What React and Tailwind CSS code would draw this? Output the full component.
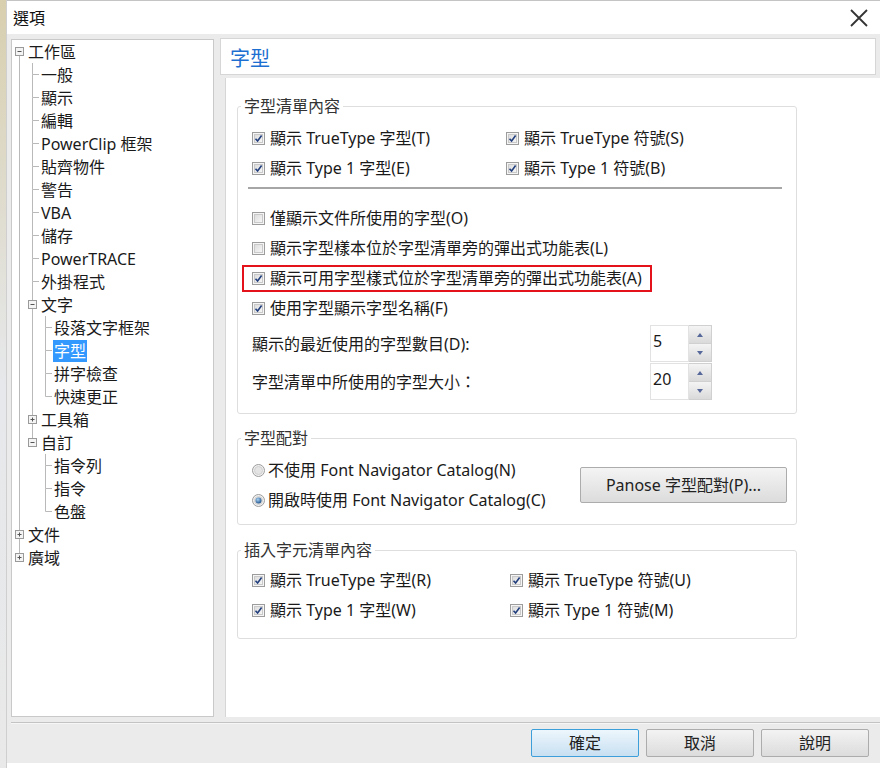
import React from 'react';

const FONT = { fontFamily: '"Noto Sans", "Noto Sans CJK TC", sans-serif' };

const tree = [
  { t: '工作區', l: 0, exp: '-' },
  { t: '一般', l: 1 },
  { t: '顯示', l: 1 },
  { t: '編輯', l: 1 },
  { t: 'PowerClip 框架', l: 1 },
  { t: '貼齊物件', l: 1 },
  { t: '警告', l: 1 },
  { t: 'VBA', l: 1 },
  { t: '儲存', l: 1 },
  { t: 'PowerTRACE', l: 1 },
  { t: '外掛程式', l: 1 },
  { t: '文字', l: 1, exp: '-' },
  { t: '段落文字框架', l: 2 },
  { t: '字型', l: 2, sel: true },
  { t: '拼字檢查', l: 2 },
  { t: '快速更正', l: 2 },
  { t: '工具箱', l: 1, exp: '+' },
  { t: '自訂', l: 1, exp: '-' },
  { t: '指令列', l: 2 },
  { t: '指令', l: 2 },
  { t: '色盤', l: 2 },
  { t: '文件', l: 0, exp: '+' },
  { t: '廣域', l: 0, exp: '+' },
];

// does the item (or ancestor) at level c still have a sibling below row i
const hasNext = (i, c) => {
  for (let j = i + 1; j < tree.length; j++) {
    if (tree[j].l < c) return false;
    if (tree[j].l === c) return true;
  }
  return false;
};

const LINE = '#b9b9b9';

const TreeGuides = ({ i, row }) => {
  const w = (row.l + 1) * 13;
  const own = row.l;
  const cx = own * 13 + 6.5;
  return (
    <svg width={w} height="23" className="shrink-0">
      {Array.from({ length: own }).map((_, c) =>
        hasNext(i, c) ? <line key={c} x1={c * 13 + 6.5} y1="0" x2={c * 13 + 6.5} y2="23" stroke={LINE} /> : null
      )}
      {i > 0 && <line x1={cx} y1="0" x2={cx} y2="11.5" stroke={LINE} />}
      {hasNext(i, own) && <line x1={cx} y1="11.5" x2={cx} y2="23" stroke={LINE} />}
      {row.exp ? (
        <g>
          <rect x={cx - 4} y="7.5" width="8" height="8" fill="#f4f4f4" stroke="#9a9a9a" />
          <line x1={cx - 2} y1="11.5" x2={cx + 2} y2="11.5" stroke="#555" />
          {row.exp === '+' && <line x1={cx} y1="9.5" x2={cx} y2="13.5" stroke="#555" />}
        </g>
      ) : (
        <line x1={cx} y1="11.5" x2={cx + 6.5} y2="11.5" stroke={LINE} />
      )}
    </svg>
  );
};

const Check = ({ on = true }) => (
  <svg width="13" height="13" className="shrink-0">
    <defs>
      <linearGradient id="cbg" x1="0" y1="0" x2="1" y2="1">
        <stop offset="0" stopColor="#dcdcdc" />
        <stop offset="1" stopColor="#f7f7f7" />
      </linearGradient>
    </defs>
    <rect x="0.5" y="0.5" width="12" height="12" fill="#f5f5f5" stroke="#9c9c9c" />
    <rect x="2.5" y="2.5" width="8" height="8" fill="url(#cbg)" stroke="#c9c9c9" />
    {on && <path d="M3.5 6.8 L5.6 9 L9.6 3.6" fill="none" stroke="#213e7c" strokeWidth="1.6" />}
  </svg>
);

const Radio = ({ on }) => (
  <svg width="13" height="13" className="shrink-0">
    <defs>
      <radialGradient id="rdot" cx="0.4" cy="0.35" r="0.7">
        <stop offset="0" stopColor="#a9d3f5" />
        <stop offset="1" stopColor="#1a4e86" />
      </radialGradient>
    </defs>
    <circle cx="6.5" cy="6.5" r="6" fill="#f0f0f0" stroke="#9c9c9c" />
    <circle cx="6.5" cy="6.5" r="4" fill="#e4e4e4" stroke="#d0d0d0" />
    {on && <circle cx="6.5" cy="6.5" r="3" fill="url(#rdot)" />}
  </svg>
);

const CheckRow = ({ text, on = true }) => (
  <div className="flex items-center h-[30px] gap-[5px] whitespace-nowrap">
    <Check on={on} />
    <span>{text}</span>
  </div>
);

const Spinner = ({ value }) => (
  <div className="flex h-[37px]">
    <div className="w-[39px] bg-white border border-[#e2e2e2] pl-[2px] pt-[5px] leading-[20px]">{value}</div>
    <div className="w-[23px] flex flex-col border border-[#d0d0d0] border-l-0">
      <div className="flex-1 flex items-center justify-center bg-gradient-to-b from-[#f4f4f4] to-[#dadada] border-b border-[#d0d0d0]">
        <svg width="6" height="4"><path d="M0 4 L3 0 L6 4 Z" fill="#56679a" /></svg>
      </div>
      <div className="flex-1 flex items-center justify-center bg-gradient-to-b from-[#f4f4f4] to-[#dadada]">
        <svg width="6" height="4"><path d="M0 0 L3 4 L6 0 Z" fill="#56679a" /></svg>
      </div>
    </div>
  </div>
);

const Group = ({ title, className = '', children }) => (
  <fieldset className={`w-[560px] border border-[#dedede] rounded-[3px] ${className}`}>
    <legend className="ml-[3px] px-[3px] leading-[20px] text-[#333]">{title}</legend>
    {children}
  </fieldset>
);

const Btn = ({ children, primary }) => (
  <button
    className={`w-[108px] h-[28px] rounded-[2px] border text-[16px] text-[#222] ${
      primary
        ? 'border-[#3d9fda] bg-gradient-to-b from-[#edf6fc] to-[#c8e0f2]'
        : 'border-[#acacac] bg-gradient-to-b from-[#f3f3f3] to-[#dcdcdc]'
    }`}
  >
    {children}
  </button>
);

export default function App() {
  return (
    <div className="flex w-[880px] h-[768px] bg-white text-[16px] text-[#1a1a1a]" style={FONT}>
      <div className="w-[7px] h-full bg-gradient-to-b from-[#d8cfae] via-[#e6e8eb] to-[#e9e9e9] border-r border-[#cfcfcf]" />
      <div className="flex-1 flex flex-col border-t border-[#c4c4c4]">
        <div className="h-[33px] flex items-center justify-between pl-[6px] pr-[11px]">
          <span className="text-[16px] text-[#111]">選項</span>
          <svg width="20" height="20" viewBox="0 0 20 20">
            <path d="M2 2 L18 18 M18 2 L2 18" stroke="#333" strokeWidth="1.8" />
          </svg>
        </div>
        <div className="h-[729px] bg-[#ebebeb] flex flex-col pl-[4px] pt-[5px]">
          <div className="flex h-[678px]">
            <div className="w-[203px] shrink-0 bg-white border border-[#c9c9c9] pl-[1px]">
              {tree.map((row, i) => (
                <div key={i} className="flex items-center h-[23px] whitespace-nowrap">
                  <TreeGuides i={i} row={row} />
                  <span
                    className={`ml-[1px] px-[1px] leading-[22px] ${
                      row.sel ? 'bg-[#3399ff] text-white' : ''
                    }`}
                  >
                    {row.t}
                  </span>
                </div>
              ))}
            </div>
            <div className="flex-1 flex flex-col ml-[6px] -mt-[1px]">
              <div className="h-[37px] mr-[4px] bg-white border border-[#d6d6d6] flex items-center pl-[9px] pt-[4px] text-[20px] text-[#1c6fd1]">
                字型
              </div>
              <div className="flex-1 mt-[3px] ml-[5px] bg-white border-l border-[#d6d6d6] pl-[11px] pt-[18px]">
                <Group title="字型清單內容">
                  <div className="pl-[14px] pt-[7px] pb-[13px]">
                    <div className="flex">
                      <div className="w-[254px]">
                        <CheckRow text="顯示 TrueType 字型(T)" />
                        <CheckRow text="顯示 Type 1 字型(E)" />
                      </div>
                      <div>
                        <CheckRow text="顯示 TrueType 符號(S)" />
                        <CheckRow text="顯示 Type 1 符號(B)" />
                      </div>
                    </div>
                    <div className="-ml-[4px] w-[534px] h-[2px] bg-[#a6a6a6] mt-[4px] mb-[14px]" />
                    <CheckRow text="僅顯示文件所使用的字型(O)" on={false} />
                    <CheckRow text="顯示字型樣本位於字型清單旁的彈出式功能表(L)" on={false} />
                    <div className="h-[30px] flex items-center">
                      <div className="-ml-[10px] pl-[8px] w-[410px] h-[27px] border-2 border-[#e3121b] flex items-center gap-[5px] whitespace-nowrap">
                        <Check />
                        <span>顯示可用字型樣式位於字型清單旁的彈出式功能表(A)</span>
                      </div>
                    </div>
                    <CheckRow text="使用字型顯示字型名稱(F)" />
                    <div className="flex items-center mt-[2px]">
                      <span className="w-[398px]">顯示的最近使用的字型數目(D):</span>
                      <Spinner value="5" />
                    </div>
                    <div className="flex items-center mt-[1px]">
                      <span className="w-[398px]">字型清單中所使用的字型大小：</span>
                      <Spinner value="20" />
                    </div>
                  </div>
                </Group>
                <Group title="字型配對" className="mt-[14px]">
                  <div className="pl-[14px] pt-[7px] pb-[9px] flex items-center">
                    <div className="w-[328px]">
                      <div className="flex items-center h-[30px] gap-[3px] whitespace-nowrap">
                        <Radio on={false} />
                        <span>不使用 Font Navigator Catalog(N)</span>
                      </div>
                      <div className="flex items-center h-[30px] gap-[3px] whitespace-nowrap">
                        <Radio on />
                        <span>開啟時使用 Font Navigator Catalog(C)</span>
                      </div>
                    </div>
                    <button className="w-[207px] h-[36px] rounded-[2px] border border-[#acacac] bg-gradient-to-b from-[#f4f4f4] to-[#dcdcdc] text-[16px] text-[#222]">
                      Panose 字型配對(P)...
                    </button>
                  </div>
                </Group>
                <Group title="插入字元清單內容" className="mt-[15px]">
                  <div className="pl-[14px] pt-[5px] pb-[13px] flex">
                    <div className="w-[258px]">
                      <CheckRow text="顯示 TrueType 字型(R)" />
                      <CheckRow text="顯示 Type 1 字型(W)" />
                    </div>
                    <div>
                      <CheckRow text="顯示 TrueType 符號(U)" />
                      <CheckRow text="顯示 Type 1 符號(M)" />
                    </div>
                  </div>
                </Group>
              </div>
            </div>
          </div>
          <div className="mt-[5px] h-[2px] border-t border-[#c3c3c3] bg-[#f6f6f6]" />
          <div className="flex justify-end gap-[7px] pr-[11px] mt-[5px]">
            <Btn primary>確定</Btn>
            <Btn>取消</Btn>
            <Btn>說明</Btn>
          </div>
        </div>
      </div>
    </div>
  );
}
